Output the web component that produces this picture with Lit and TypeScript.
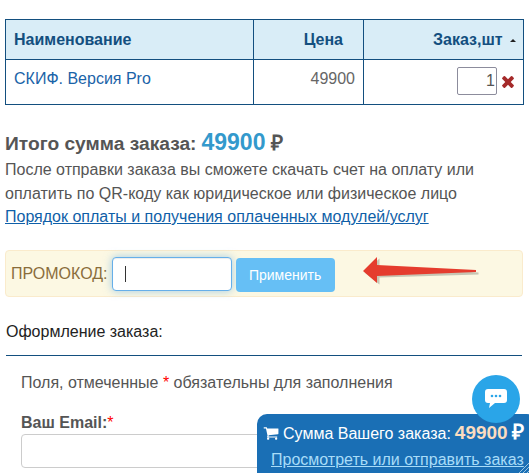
import { LitElement, html, css } from "lit";
import { customElement } from "lit/decorators.js";

@customElement("app-root")
export class AppRoot extends LitElement {
  static styles = css`
    :host { display: block; width: 529px; height: 473px; overflow: hidden; position: relative; background: #fff; font-family: "Liberation Sans", Arial, sans-serif; font-size: 16px; color: #555; }
    .page { padding: 19px 6px 0 5px; display: flex; flex-direction: column; }
    table { border-collapse: collapse; width: 518px; table-layout: fixed; }
    th, td { border: 1px solid #134f7f; padding: 0 8px; }
    th { height: 39px; background: #d9edf7; color: #134f7f; font-weight: bold; text-align: right; }
    th:first-child, td:first-child { text-align: left; }
    td { height: 45px; vertical-align: top; text-align: right; padding-top: 9px; box-sizing: border-box; line-height: 20px; color: #666; }
    td a { color: #1a63a8; text-decoration: none; }
    .sort { display: inline-block; margin-left: 3px; border: 3.5px solid transparent; border-bottom: 3.5px solid #222; border-top: 0; vertical-align: 3px; }
    .qty { display: inline-flex; justify-content: flex-end; align-items: center; box-sizing: border-box; width: 40px; height: 28px; border: 1px solid #8c8c9c; border-radius: 2px; color: #555; font-size: 16px; vertical-align: top; margin-top: -1px; padding-right: 1px; }
    .cell-qty { display: flex; justify-content: flex-end; align-items: flex-start; gap: 5px; }
    .x { margin-top: 8px; display: block; }
    .total { margin-top: 24px; font-weight: bold; font-size: 19.2px; line-height: 26px; color: #555; display: flex; align-items: baseline; gap: 5px; }
    .total b { font-size: 23px; color: #3399cc; }
    .rub { font-size: 21px; margin-left: 1px; }
    .info { line-height: 23.5px; margin-top: 1px; color: #555; }
    .info a { color: #0f5fa8; text-decoration: underline; display: block; }
    .promo { margin-top: 21.5px; box-sizing: border-box; width: 518px; height: 47px; background: #fcf8e3; border: 1px solid #faebcc; border-radius: 4px; display: flex; align-items: center; padding-left: 5px; color: #8a6d3b; position: relative; }
    .pinput { box-sizing: border-box; width: 120px; height: 34px; margin-left: 4px; background: #fff; border: 1px solid #66afe9; border-radius: 4px; box-shadow: 0 0 8px rgba(102,175,233,.6), inset 0 1px 1px rgba(0,0,0,.075); display: flex; align-items: center; padding-left: 12px; }
    .caret { width: 1px; height: 16px; background: #333; }
    .btn { box-sizing: border-box; margin-left: 4px; width: 99px; height: 34px; background: #66bff5; color: #fff; border-radius: 4px; font-size: 14px; display: flex; align-items: center; justify-content: center; position: relative; top: 1px; }
    .arrow { position: absolute; left: 355px; top: 2px; }
    .h { margin-top: 24px; margin-left: 1px; color: #222; line-height: 22px; }
    .rule { margin: 12px 0 0 1px; height: 1px; background: #134f7f; width: 516px; }
    .form { padding: 16px 0 0 16px; display: flex; flex-direction: column; }
    .note { line-height: 22px; color: #555; }
    .red { color: #f00; }
    label { margin-top: 18px; font-weight: bold; line-height: 22px; color: #555; }
    label .red { font-weight: normal; }
    .email { box-sizing: border-box; margin-top: 0; width: 500px; height: 34px; border: 1px solid #ccc; border-radius: 4px; background: #fff; }
    .panel { position: absolute; left: 257px; top: 414px; width: 280px; height: 70px; box-sizing: border-box; background: #1a6fb5; border-radius: 10px 10px 0 0; color: #fff; padding: 6px 0 0 6px; white-space: nowrap; }
    .sum { display: flex; align-items: baseline; line-height: 24px; }
    .sum svg { align-self: center; margin-right: 4px; }
    .sum b { font-size: 19px; color: #fbdcc0; margin: 0 4px 0 4px; }
    .rubw { font-weight: bold; font-size: 21px; }
    .panel a { display: block; margin-left: 8px; color: #a8dcf8; text-decoration: underline; line-height: 22px; margin-top: 3px; }
    .chat { position: absolute; left: 472px; top: 375px; width: 48px; height: 48px; border-radius: 50%; background: #2aa5e8; display: flex; align-items: center; justify-content: center; }
    .grip { position: absolute; left: 519px; top: 463px; }
  `;

  render() {
    return html`
      <div class="page">
        <table>
          <colgroup><col style="width:248px" /><col style="width:110px" /><col style="width:160px" /></colgroup>
          <tr><th>Наименование</th><th style="padding-right:20px">Цена</th><th style="padding-right:7px">Заказ,шт <span class="sort"></span></th></tr>
          <tr>
            <td><a>СКИФ. Версия Pro</a></td>
            <td>49900</td>
            <td style="padding-right:9px;padding-top:8px"><div class="cell-qty"><span class="qty">1</span>
              <svg class="x" width="12" height="12" viewBox="296 360 1200 1200"><path d="M1490 1322q0 40-28 68l-136 136q-28 28-68 28t-68-28l-294-294-294 294q-28 28-68 28t-68-28l-136-136q-28-28-28-68t28-68l294-294-294-294q-28-28-28-68t28-68l136-136q28-28 68-28t68 28l294 294 294-294q28-28 68-28t68 28l136 136q28 28 28 68t-28 68l-294 294 294 294q28 28 28 68z" fill="#a52a2a"/></svg></div></td>
          </tr>
        </table>
        <div class="total">Итого сумма заказа: <b>49900</b> <span class="rub">₽</span></div>
        <div class="info">После отправки заказа вы сможете скачать счет на оплату или<br />оплатить по QR-коду как юридическое или физическое лицо
          <a>Порядок оплаты и получения оплаченных модулей/услуг</a></div>
        <div class="promo">ПРОМОКОД:
          <div class="pinput"><span class="caret"></span></div>
          <div class="btn">Применить</div>
          <svg class="arrow" width="120" height="36" viewBox="0 0 120 36">
            <path d="M2 18 L17 4 L17 12 L116 18 L116 20 L17 23 L17 30 Z" fill="#b9b9a8" transform="translate(1.5 1.5)" opacity=".8"/>
            <path d="M2 18 L16 4 L16 12 L115 17 L115 19 L16 23 L16 30 Z" fill="#e53c2e"/>
          </svg>
        </div>
        <div class="h">Оформление заказа:</div>
        <div class="rule"></div>
        <div class="form">
          <div class="note">Поля, отмеченные <span class="red">*</span> обязательны для заполнения</div>
          <label>Ваш Email:<span class="red">*</span></label>
          <div class="email"></div>
        </div>
      </div>
      <div class="panel">
        <div class="sum">
          <svg width="16" height="16" viewBox="0 0 1792 1792"><path fill="#fff" d="M704 1536q0 52-38 90t-90 38-90-38-38-90 38-90 90-38 90 38 38 90zm896 0q0 52-38 90t-90 38-90-38-38-90 38-90 90-38 90 38 38 90zm128-1088v512q0 24-16.5 42.5t-40.5 21.5l-1044 122q13 60 13 70 0 16-24 64h920q26 0 45 19t19 45-19 45-45 19h-1024q-26 0-45-19t-19-45q0-11 8-31.5t16-36 21.5-40 15.5-29.5l-177-823h-204q-26 0-45-19t-19-45 19-45 45-19h256q16 0 28.5 6.5t19.5 15.5 13 24.5 8 26 5.5 29.5 4.5 26h1201q26 0 45 19t19 45z"/></svg>
          Сумма Вашего заказа: <b>49900</b> <span class="rubw">₽</span>
        </div>
        <a>Просмотреть или отправить заказ</a>
      </div>
      <svg class="grip" width="10" height="10" viewBox="0 0 10 10"><path d="M0 10 L10 0 M4 10 L10 4 M8 10 L10 8" stroke="#9cc4e0" stroke-width="1" fill="none"/></svg>
      <div class="chat">
        <svg width="22" height="20" viewBox="0 0 22 20"><path d="M3 0 H19 Q22 0 22 3 V11 Q22 14 19 14 H10 L4 19 L5 14 H3 Q0 14 0 11 V3 Q0 0 3 0 Z" fill="#fff"/><circle cx="7" cy="7" r="1.3" fill="#2aa5e8"/><circle cx="11" cy="7" r="1.3" fill="#2aa5e8"/><circle cx="15" cy="7" r="1.3" fill="#2aa5e8"/></svg>
      </div>
    `;
  }
}
